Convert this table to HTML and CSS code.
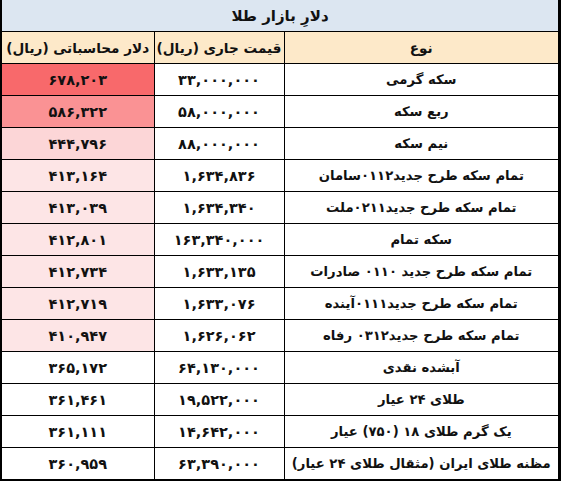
FILE: index.html
```html
<!DOCTYPE html>
<html lang="fa">
<head>
<meta charset="utf-8">
<link rel="stylesheet" href="styles.css">
</head>
<body>
<div class="frame">
<table class="sheet" dir="rtl">
<colgroup><col class="c-type"><col class="c-price"><col class="c-usd"></colgroup>
<tr class="title"><td colspan="3">دلارِ بازار طلا</td></tr>
<tr class="head"><th>نوع</th><th>قیمت جاری (ریال)</th><th>دلار محاسباتی (ریال)</th></tr>
<tr><td class="name">سکه گرمی</td><td>۳۳,۰۰۰,۰۰۰</td><td class="usd h0">۶۷۸,۲۰۳</td></tr>
<tr><td class="name">ربع سکه</td><td>۵۸,۰۰۰,۰۰۰</td><td class="usd h1">۵۸۶,۳۲۲</td></tr>
<tr><td class="name">نیم سکه</td><td>۸۸,۰۰۰,۰۰۰</td><td class="usd h2">۴۴۴,۷۹۶</td></tr>
<tr><td class="name">تمام سکه طرح جدید۰۱۱۲سامان</td><td>۱,۶۳۴,۸۳۶</td><td class="usd h3">۴۱۳,۱۶۴</td></tr>
<tr><td class="name">تمام سکه طرح جدید۰۲۱۱ملت</td><td>۱,۶۳۴,۳۴۰</td><td class="usd h3">۴۱۳,۰۳۹</td></tr>
<tr><td class="name">سکه تمام</td><td>۱۶۳,۳۴۰,۰۰۰</td><td class="usd h3">۴۱۲,۸۰۱</td></tr>
<tr><td class="name">تمام سکه طرح جدید ۰۱۱۰ صادرات</td><td>۱,۶۳۳,۱۳۵</td><td class="usd h3">۴۱۲,۷۳۴</td></tr>
<tr><td class="name">تمام سکه طرح جدید۰۱۱۱آینده</td><td>۱,۶۳۳,۰۷۶</td><td class="usd h3">۴۱۲,۷۱۹</td></tr>
<tr><td class="name">تمام سکه طرح جدید۰۳۱۲ رفاه</td><td>۱,۶۲۶,۰۶۲</td><td class="usd h3">۴۱۰,۹۴۷</td></tr>
<tr><td class="name">آبشده نقدی</td><td>۶۴,۱۳۰,۰۰۰</td><td class="usd">۳۶۵,۱۷۲</td></tr>
<tr><td class="name">طلای ۲۴ عیار</td><td>۱۹,۵۲۲,۰۰۰</td><td class="usd">۳۶۱,۴۶۱</td></tr>
<tr><td class="name">یک گرم طلای ۱۸ (۷۵۰) عیار</td><td>۱۴,۶۴۲,۰۰۰</td><td class="usd">۳۶۱,۱۱۱</td></tr>
<tr><td class="name">مظنه طلای ایران (مثقال طلای ۲۴ عیار)</td><td>۶۳,۳۹۰,۰۰۰</td><td class="usd">۳۶۰,۹۵۹</td></tr>
</table>
</div>
</body>
</html>
```
FILE: styles.css
```css
html, body {
  margin: 0;
  padding: 0;
  background: #ffffff;
}
.frame {
  width: 556px;
  border-left: 2px solid #000;
  border-right: 3px solid #000;
  border-bottom: 2px solid #000;
}
.sheet {
  width: 556px;
  border-collapse: collapse;
  table-layout: fixed;
  font-family: "DejaVu Sans", sans-serif;
  font-weight: bold;
  font-size: 14.5px;
  color: #111;
}
.c-type { width: 274px; }
.c-price { width: 130px; }
.c-usd { width: 152px; }
.sheet td, .sheet th {
  height: 31px;
  padding: 0;
  text-align: center;
  vertical-align: middle;
  border-bottom: 1px solid #000;
  border-left: 1px solid #000;
  white-space: nowrap;
  overflow: hidden;
}
.sheet td:last-child, .sheet th:last-child { border-left: none; }
.sheet tr:last-child td { border-bottom: none; }
.sheet .name { font-size: 13.2px; }
.title td {
  background: #dce6f1;
  border-left: none;
  font-size: 15px;
}
.head th {
  background: #fde9c9;
  font-weight: bold;
  font-size: 13.6px;
}
.h0 { background: #f8696b; }
.h1 { background: #fa9294; }
.h2 { background: #fcd6d7; }
.h3 { background: #fde5e6; }
```
